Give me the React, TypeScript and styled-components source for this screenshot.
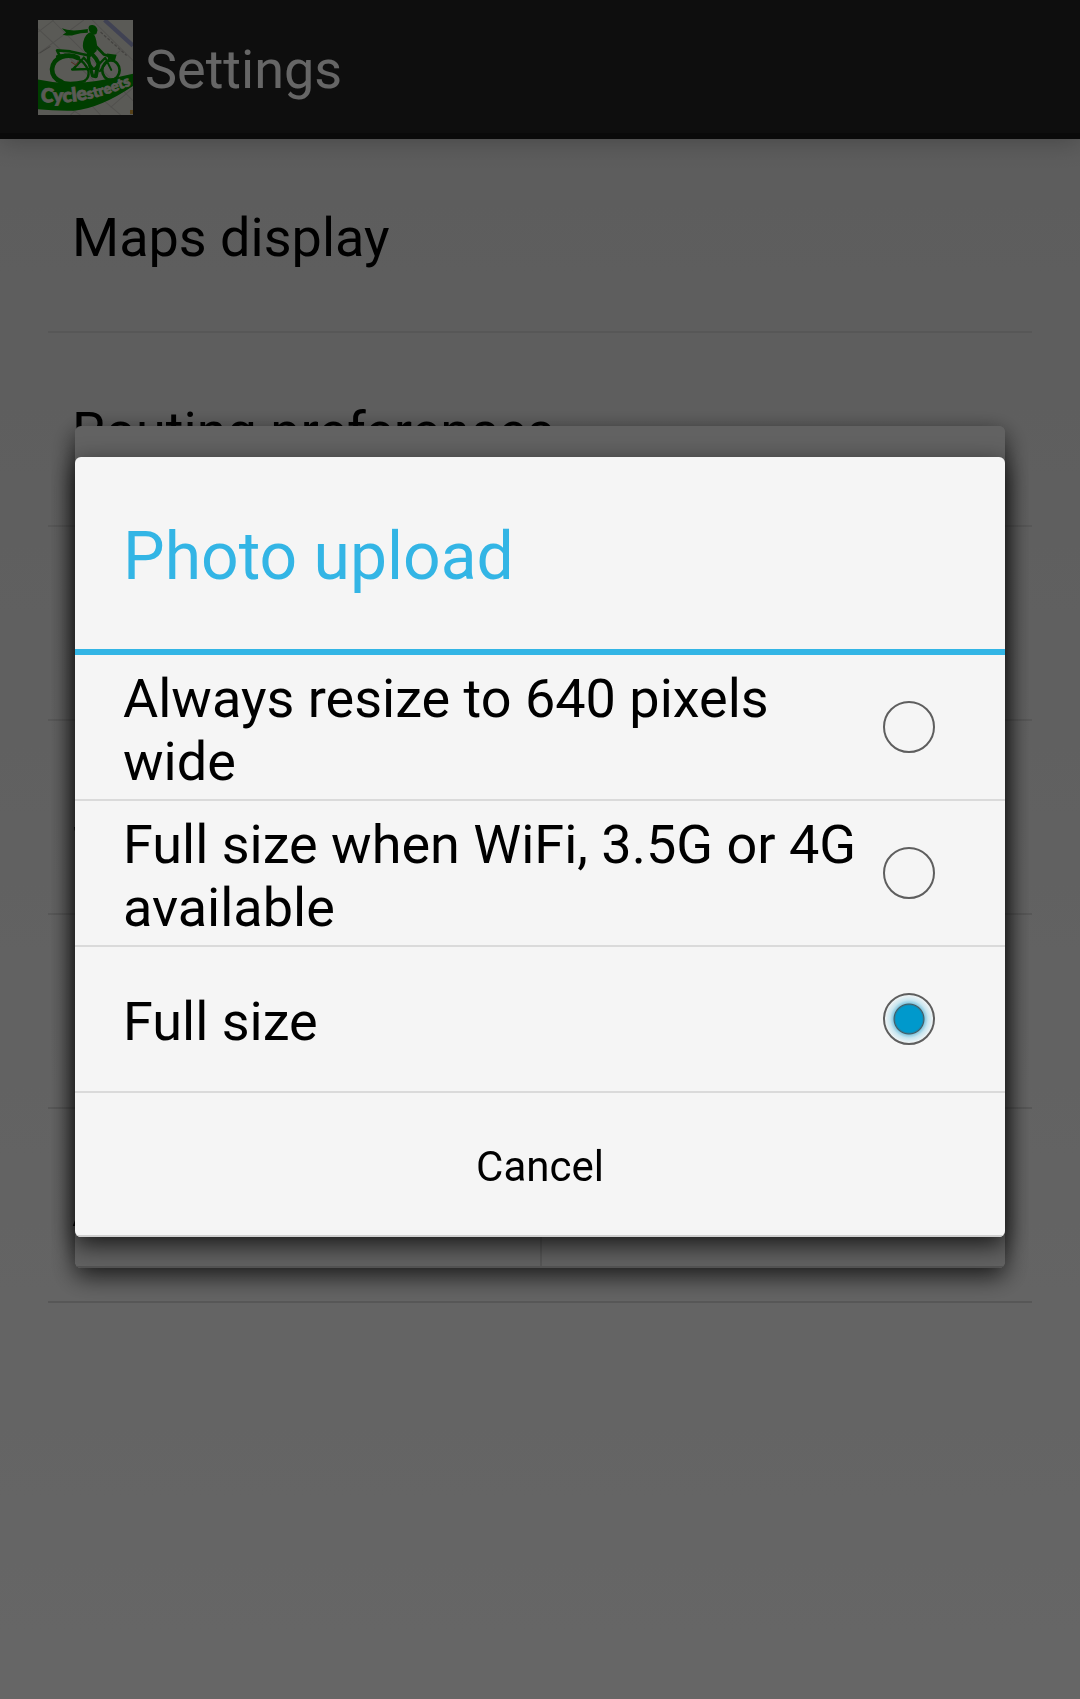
import React, { useState } from "react";
import styled, { createGlobalStyle } from "styled-components";

const GlobalStyle = createGlobalStyle`
  *, *::before, *::after { box-sizing: border-box; }
  body {
    margin: 0;
    background: #fff;
    font-family: Roboto, "Noto Sans", sans-serif;
    color: #000;
  }
`;

const Page = styled.div`
  min-height: 100vh;
  display: flex;
  flex-direction: column;
  background: linear-gradient(#e6e6e6, #ffffff);
`;

const ActionBar = styled.header`
  display: flex;
  align-items: center;
  gap: 12px;
  height: 139px;
  padding: 0 38px 5px;
  background: #242424;
  box-shadow: inset 0 -6px 0 #191919, 0 2px 24px rgba(0, 0, 0, 0.25);
`;

const BarTitle = styled.h1`
  margin: 0;
  padding-top: 5px;
  font-size: 54px;
  line-height: 63px;
  font-weight: 400;
  color: #fff;
`;

const LogoSvg = styled.svg`
  width: 95px;
  height: 95px;
  flex: none;
`;

const SettingsList = styled.ul`
  margin: 0;
  padding: 0 48px;
  list-style: none;
`;

const SettingsItem = styled.li`
  display: flex;
  align-items: center;
  height: 194px;
  padding: 4px 24px 0;
  border-bottom: 2px solid #dadada;
  font-size: 54px;
  line-height: 63px;
`;

const Layer = styled.div<{ $dim?: boolean }>`
  position: fixed;
  inset: 0;
  display: flex;
  align-items: center;
  padding: 0 75px 5px;
  background: ${(p) => (p.$dim ? "rgba(0, 0, 0, 0.6)" : "transparent")};
`;

const Panel = styled.section`
  flex: 1;
  display: flex;
  flex-direction: column;
  overflow: hidden;
  background: #f5f5f5;
  border-radius: 6px;
`;

const PanelShadow = styled.div`
  flex: 1;
  display: flex;
  border-radius: 6px;
  box-shadow: 0 8px 24px rgba(0, 0, 0, 0.75);
`;

const PanelBody = styled.div`
  height: 698px;
`;

const SplitFooter = styled.div`
  display: grid;
  grid-template-columns: 1fr 1fr;
  height: 144px;
  border-top: 2px solid #dadada;
  border-bottom: 2px solid #d0d0d0;
`;

const SplitCell = styled.div`
  & + & {
    border-left: 2px solid #dadada;
  }
`;

const DialogTitle = styled.h2`
  display: flex;
  align-items: center;
  height: 198px;
  margin: 0;
  padding: 6px 48px 0;
  border-bottom: 6px solid #33b5e5;
  font-size: 66px;
  line-height: 77px;
  font-weight: 400;
  color: #33b5e5;
`;

const Choices = styled.fieldset`
  margin: 0;
  padding: 0;
  border: 0;
`;

const Choice = styled.label`
  display: flex;
  align-items: center;
  gap: 20px;
  height: 146px;
  padding: 0 70px 0 48px;
  border-bottom: 2px solid #dadada;
  font-size: 54px;
  line-height: 63px;
`;

const ChoiceText = styled.span`
  flex: 1;
  padding-top: 5px;
`;

const Radio = styled.input`
  appearance: none;
  flex: none;
  width: 52px;
  height: 52px;
  margin: 0;
  border: 2px solid #5e5e5e;
  border-radius: 50%;

  &:checked {
    background: radial-gradient(
      circle,
      #0099cc 13px,
      #1a86ac 14px,
      #4a5a60 15px,
      #8ccbe2 16px,
      #c9e6f0 19px,
      #f0f4f5 24px
    );
  }
`;

const CancelButton = styled.button`
  height: 144px;
  padding: 4px 0 0;
  border: 0;
  border-bottom: 2px solid #cfcfcf;
  background: none;
  font-family: inherit;
  font-size: 42px;
  line-height: 49px;
  color: #000;
`;

function Logo() {
  return (
    <LogoSvg viewBox="53 59 284 284" role="img" aria-label="CycleStreets">
      <defs>
        <path id="ribbon" d="M61 303 C130 310 215 306 345 247" />
      </defs>
      <rect x="53" y="59" width="284" height="284" fill="#e2e1d7" />
      <g fill="none" stroke="#c8c7c0" strokeWidth="3">
        <path d="M53 95 L100 59 M53 160 L190 59 M95 59 L337 300 M53 85 L220 240 M300 150 L240 200 M215 59 L337 180" />
        <path d="M150 343 L200 300 L240 343 M180 343 L110 300 M250 300 L300 343 M337 262 L270 320" />
      </g>
      <path d="M240 95 L318 165" fill="none" stroke="#a8a6a0" strokeWidth="4" strokeDasharray="9 5" />
      <path d="M252 59 L337 136" fill="none" stroke="#a0a6d0" strokeWidth="13" />
      <path d="M58 158 L90 138" fill="none" stroke="#a8a7a0" strokeWidth="3" />
      <rect x="328" y="328" width="9" height="12" fill="#d8a440" />
      <path d="M53 237 Q95 246 145 249 Q230 246 337 220 V256 Q240 322 160 330 Q100 331 53 326 Z" fill="#009c00" />
      <g fill="none" stroke="#009c00" strokeLinecap="round" strokeLinejoin="round">
        <path d="M172 172 C145 158 98 167 95 206 C95 226 108 238 124 244" strokeWidth="14" />
        <path d="M110 168 C140 156 190 170 204 212 C206 228 198 238 190 242" strokeWidth="7" />
        <path d="M122 244 Q150 252 192 242" strokeWidth="8" />
        <path d="M118 166 L110 150 L150 153 L208 166" strokeWidth="8" />
        <path d="M158 206 L190 172 M155 207 L218 205 L190 172 M222 205 L252 174" strokeWidth="7" />
        <ellipse cx="271" cy="209" rx="26" ry="29" strokeWidth="8" />
        <path d="M254 172 L272 208 M238 212 L264 178" strokeWidth="6" />
        <path d="M222 133 L250 162 L262 166" strokeWidth="8" />
        <path d="M205 150 L226 174 L234 188 L226 226" strokeWidth="12" />
        <path d="M204 150 L204 180 L216 226 L226 228" strokeWidth="10" />
      </g>
      <g fill="#009c00">
        <path d="M259 159 L288 163 L283 180 L263 177 Z" />
        <path d="M204 84 Q204 73 216 74 Q229 76 231 90 L228 100 Q220 105 214 101 Q206 97 204 84 Z" />
        <path d="M206 96 Q222 98 225 112 Q232 134 228 152 Q218 166 200 158 Q187 152 187 136 Q188 108 206 96 Z" />
        <path d="M124 84 Q150 95 202 86 L202 97 Q180 97 162 103 Q148 108 127 103 L137 96 Z" />
      </g>
      <path d="M152 184 L166 194 L174 182" fill="none" stroke="#d07050" strokeWidth="3" />
      <text fill="#e2e1d7" stroke="#e2e1d7" strokeWidth="2" fontFamily="Lato, sans-serif" fontWeight="800">
        <textPath href="#ribbon">
          <tspan fontSize="58">Cycle</tspan>
          <tspan fontSize="44">streets</tspan>
        </textPath>
      </text>
    </LogoSvg>
  );
}

const settings = ["Maps display", "Routing preferences", "", "S", "", "A"];

const sizes = [
  "Always resize to 640 pixels wide",
  "Full size when WiFi, 3.5G or 4G available",
  "Full size",
];

export default function App() {
  const [selected, setSelected] = useState(2);

  return (
    <>
      <GlobalStyle />
      <Page>
        <ActionBar>
          <Logo />
          <BarTitle>Settings</BarTitle>
        </ActionBar>
        <SettingsList>
          {settings.map((name, i) => (
            <SettingsItem key={i}>{name}</SettingsItem>
          ))}
        </SettingsList>
      </Page>

      <Layer aria-hidden="true">
        <PanelShadow>
          <Panel as="div">
            <PanelBody />
            <SplitFooter>
              <SplitCell />
              <SplitCell />
            </SplitFooter>
          </Panel>
        </PanelShadow>
      </Layer>

      <Layer $dim>
        <PanelShadow>
          <Panel role="dialog" aria-modal="true" aria-labelledby="dialog-title">
            <DialogTitle id="dialog-title">Photo upload</DialogTitle>
            <Choices aria-labelledby="dialog-title">
              {sizes.map((label, i) => (
                <Choice key={label} htmlFor={`size-${i}`}>
                  <ChoiceText>{label}</ChoiceText>
                  <Radio
                    type="radio"
                    name="size"
                    id={`size-${i}`}
                    checked={selected === i}
                    onChange={() => setSelected(i)}
                  />
                </Choice>
              ))}
            </Choices>
            <CancelButton type="button">Cancel</CancelButton>
          </Panel>
        </PanelShadow>
      </Layer>
    </>
  );
}
